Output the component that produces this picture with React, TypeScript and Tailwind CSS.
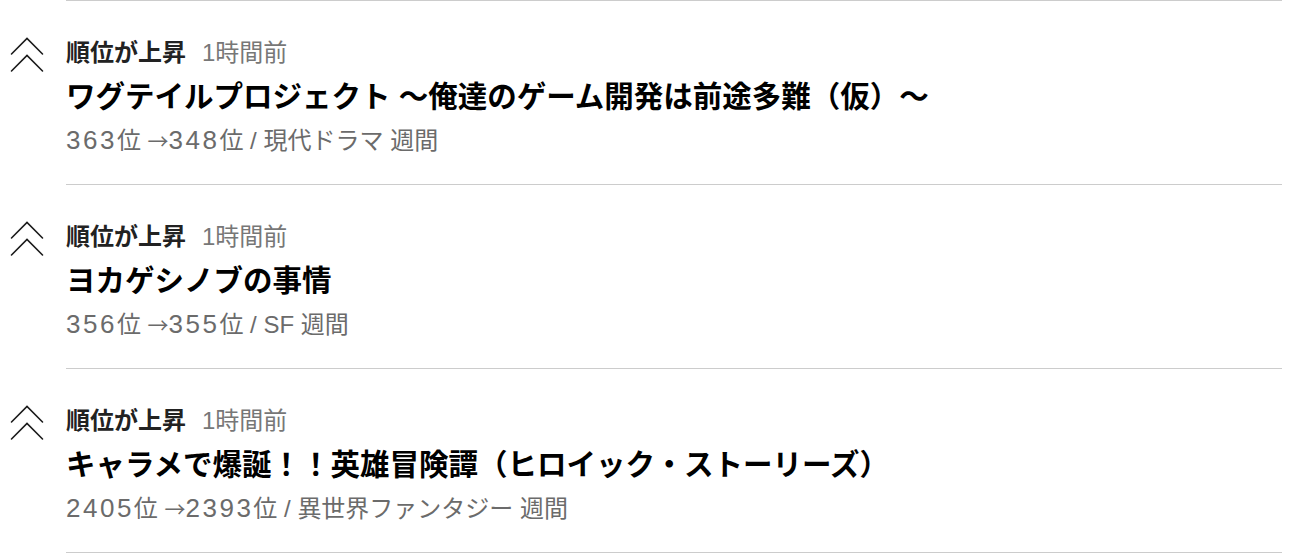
const items = [
  {
    id: 1,
    title: "ワグテイルプロジェクト ～俺達のゲーム開発は前途多難（仮）～",
    from: 363,
    to: 348,
    genre: "現代ドラマ",
  },
  {
    id: 2,
    title: "ヨカゲシノブの事情",
    from: 356,
    to: 355,
    genre: "SF",
  },
  {
    id: 3,
    title: "キャラメで爆誕！！英雄冒険譚（ヒロイック・ストーリーズ）",
    from: 2405,
    to: 2393,
    genre: "異世界ファンタジー",
  },
];

const RankUpIcon = () => (
  <svg
    width="34"
    height="36"
    viewBox="0 0 34 36"
    fill="none"
    stroke="#1c1c1c"
    strokeWidth="1.6"
    strokeLinecap="round"
    strokeLinejoin="miter"
  >
    <path d="M1.5 17 L17 1.5 L32.5 17" />
    <path d="M1.5 34 L17 18.5 L32.5 34" />
  </svg>
);

// digits in the reference are set wide and a bit larger than the kana
const Num = ({ children }) => (
  <span className="text-[26px] leading-[32px] tracking-[2.5px]">{children}</span>
);

const RankingRow = ({ title, from, to, genre, last }) => {
  return (
    <div className="flex">
      {/* Icon column */}
      <div className="w-[66px] shrink-0 pl-[10px] pt-[37px]">
        <RankUpIcon />
      </div>

      {/* Content */}
      <div
        className={`flex-1 border-t border-[#cccccc] pt-[34px] pb-[28px] ${
          last ? "border-b" : ""
        }`}
      >
        <div className="flex h-[36px] items-baseline overflow-hidden leading-[36px]">
          <span className="text-[24px] font-bold text-[#222222]">
            順位が上昇
          </span>
          <span className="ml-[16px] text-[24px] text-[#777777]">1時間前</span>
        </div>
        <p className="mt-[4px] h-[44px] text-[29.5px] font-bold leading-[44px] text-black">
          {title}
        </p>
        <p className="mt-[5px] h-[32px] overflow-hidden whitespace-nowrap text-[24px] leading-[32px] text-[#6b6b6b]">
          <Num>{from}</Num>位{" "}
          <span className="font-['Noto_Sans_CJK_JP',sans-serif] text-[21px]">→</span>
          <Num>{to}</Num>位 / {genre} 週間
        </p>
      </div>
    </div>
  );
};

export default function App() {
  return (
    <div className="min-h-screen bg-white pr-[29px] font-['Liberation_Sans','Noto_Sans_CJK_JP',sans-serif]">
      {items.map((item, i) => (
        <RankingRow key={item.id} {...item} last={i === items.length - 1} />
      ))}
    </div>
  );
}
